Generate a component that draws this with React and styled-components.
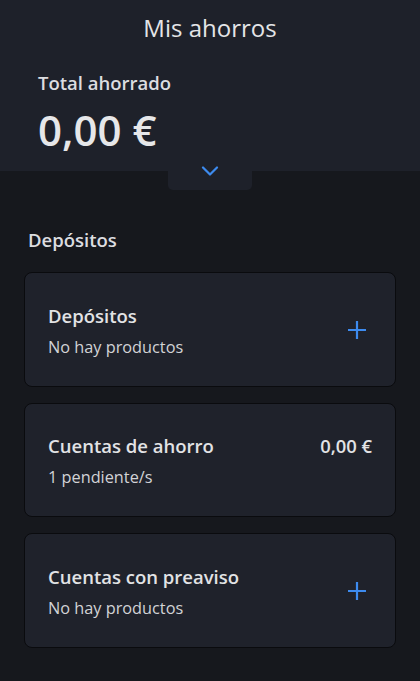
import React from 'react'
import styled, { createGlobalStyle } from 'styled-components'

const Global = createGlobalStyle`
  html, body {
    margin: 0;
    padding: 0;
    background: #16181d;
  }
  body {
    font-family: "Open Sans", "Noto Sans", sans-serif;
    color: #e4e5e7;
  }
`

const Page = styled.div`
  width: 420px;
  min-height: 681px;
  background: #16181d;
`

const Header = styled.header`
  background: #1e212a;
  height: 171px;
  box-sizing: border-box;
  padding-top: 12px;
  position: relative;
`

const Title = styled.h1`
  margin: 0;
  text-align: center;
  font-size: 24px;
  line-height: 32px;
  font-weight: 500;
  color: #e4e5e7;
`

const Summary = styled.div`
  padding: 26px 38px 0;
`

const SummaryLabel = styled.div`
  font-size: 18.5px;
  line-height: 26px;
  font-weight: 600;
  color: #dcdde0;
`

const SummaryValue = styled.div`
  margin-top: 7px;
  font-size: 42px;
  line-height: 54px;
  font-weight: 600;
  color: #e6e7e9;
`

const Toggle = styled.button`
  position: absolute;
  left: 168px;
  top: 160px;
  width: 84px;
  height: 30px;
  border: none;
  padding: 6px 0 0;
  box-sizing: border-box;
  background: #1e212a;
  border-radius: 0 0 5px 5px;
  display: flex;
  justify-content: center;
  align-items: flex-start;
  cursor: pointer;
`

const Content = styled.main`
  padding: 56px 24px 24px;
`

const SectionTitle = styled.h2`
  margin: 0 0 19px 4px;
  font-size: 18.5px;
  line-height: 26px;
  font-weight: 600;
  color: #dcdde0;
`

const List = styled.div`
  display: flex;
  flex-direction: column;
  gap: 16px;
`

const Card = styled.div`
  height: 114.5px;
  box-sizing: border-box;
  background: #1f222b;
  border: 1px solid #0a0b0e;
  border-radius: 8px;
  display: flex;
  align-items: ${p => (p.$top ? 'flex-start' : 'center')};
  padding: ${p => (p.$top ? '29px 23px 0 23px' : '2px 23px 0')};
  justify-content: space-between;
`

const CardText = styled.div`
  display: flex;
  flex-direction: column;
  gap: 7px;
`

const CardTitle = styled.div`
  font-size: 18.5px;
  line-height: 26px;
  font-weight: 600;
  color: #e2e3e5;
`

const CardSub = styled.div`
  font-size: 16.3px;
  line-height: 22px;
  color: #d2d3d6;
`

const Amount = styled.div`
  font-size: 18.4px;
  line-height: 26px;
  font-weight: 600;
  color: #e2e3e5;
`

const AddButton = styled.button`
  border: none;
  background: none;
  padding: 0;
  margin-right: 5px;
  display: flex;
  cursor: pointer;
`

const Chevron = () => (
  <svg width="18" height="11" viewBox="0 0 18 11">
    <path d="M2 1.5 L9 8.5 L16 1.5" fill="none" stroke="#3d8bef" strokeWidth="2.2" strokeLinecap="round" strokeLinejoin="round" />
  </svg>
)

const Plus = () => (
  <svg width="20" height="20" viewBox="0 0 20 20">
    <path d="M10 1 V19 M1 10 H19" stroke="#3d8bef" strokeWidth="2.2" />
  </svg>
)

const products = [
  { id: 1, title: 'Depósitos', sub: 'No hay productos', add: true },
  { id: 2, title: 'Cuentas de ahorro', sub: '1 pendiente/s', amount: '0,00 €' },
  { id: 3, title: 'Cuentas con preaviso', sub: 'No hay productos', add: true },
]

export default function App() {
  return (
    <Page>
      <Global />
      <Header>
        <Title>Mis ahorros</Title>
        <Summary>
          <SummaryLabel>Total ahorrado</SummaryLabel>
          <SummaryValue>0,00 €</SummaryValue>
        </Summary>
        <Toggle aria-label="Mostrar más">
          <Chevron />
        </Toggle>
      </Header>
      <Content>
        <SectionTitle>Depósitos</SectionTitle>
        <List>
          {products.map(item => (
            <Card key={item.id} $top={!!item.amount}>
              <CardText>
                <CardTitle>{item.title}</CardTitle>
                <CardSub>{item.sub}</CardSub>
              </CardText>
              {item.amount ? (
                <Amount>{item.amount}</Amount>
              ) : (
                <AddButton aria-label="Añadir">
                  <Plus />
                </AddButton>
              )}
            </Card>
          ))}
        </List>
      </Content>
    </Page>
  )
}
